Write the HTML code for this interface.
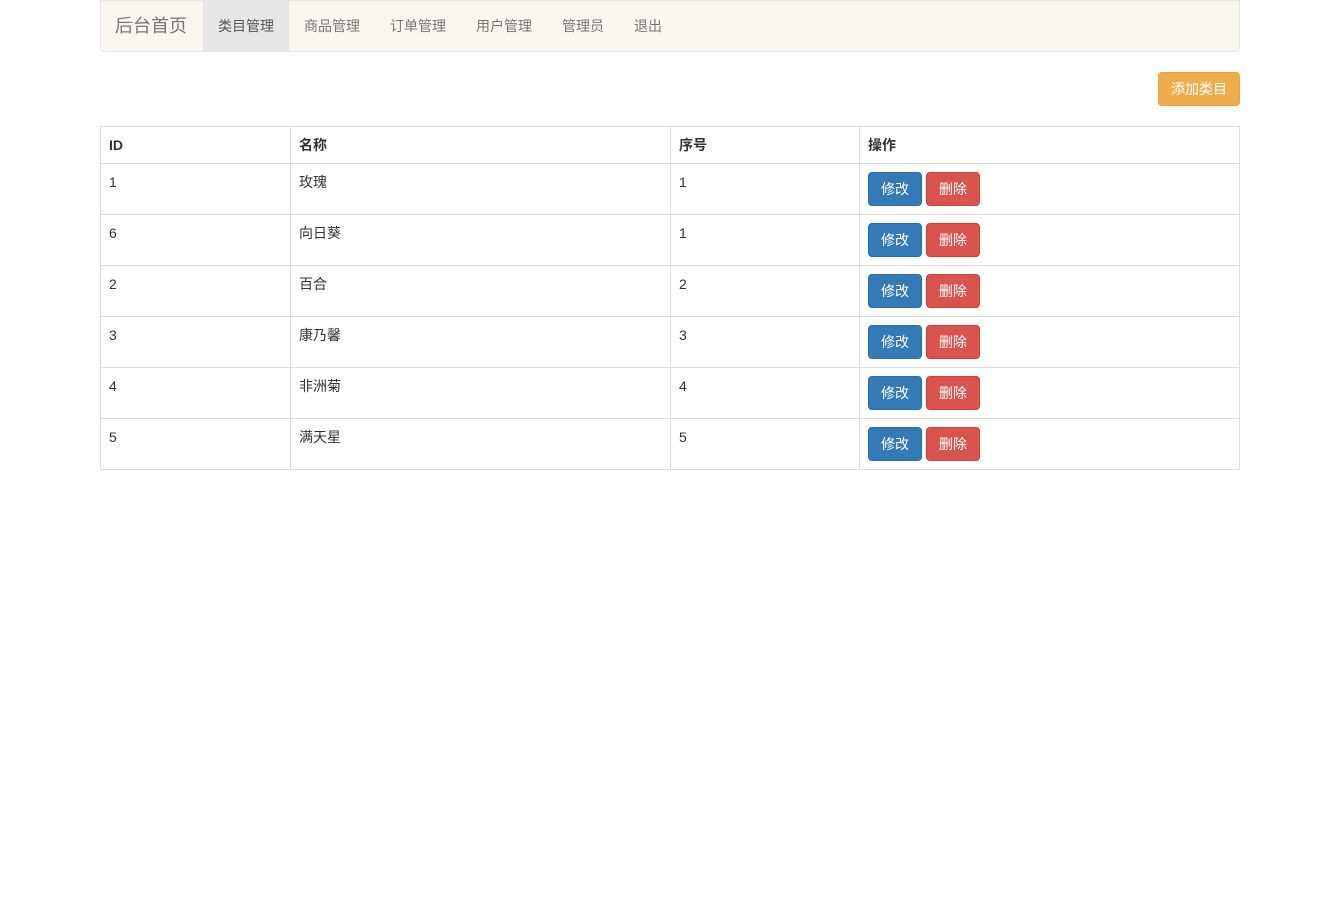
<!DOCTYPE html>
<html><head><meta charset="utf-8"><style>
body{margin:0;background:#fff;font-family:"Liberation Sans","Noto Sans CJK SC",sans-serif;font-size:14px;color:#333;}
.nav{position:absolute;left:100px;top:0;width:1138px;height:50px;background:#f9f7f0;border:1px solid #e7e7e7;border-radius:0 0 4px 4px;}
.nav a{position:absolute;top:0;height:50px;line-height:50px;color:#777;text-decoration:none;}
.brand{font-size:18px;left:14px;}
.act{background:#e7e7e7;color:#555!important;padding:0 15px;}
.add{position:absolute;left:1158px;top:72px;width:80px;height:32px;background:#f0ad4e;border:1px solid #eea236;border-radius:4px;color:#fff;text-align:center;line-height:32px;}
table{position:absolute;left:100px;top:126px;width:1140px;border-collapse:collapse;}
td,th{border:1px solid #ddd;padding:8px;vertical-align:top;text-align:left;line-height:20px;}
th{height:20px;}
td{height:34px;}
.b{display:inline-block;width:52px;height:32px;line-height:32px;text-align:center;color:#fff;border-radius:4px;}
.m{background:#337ab7;border:1px solid #2e6da4;}
.d{background:#d9534f;border:1px solid #d43f3a;}
</style></head><body>
<div class="nav">
<a class="brand">后台首页</a>
<a class="act" style="left:102px">类目管理</a>
<a style="left:203px">商品管理</a>
<a style="left:289px">订单管理</a>
<a style="left:375px">用户管理</a>
<a style="left:461px">管理员</a>
<a style="left:533px">退出</a>
</div>
<div class="add">添加类目</div>
<table>
<tr><th style="width:173px">ID</th><th style="width:363px">名称</th><th style="width:172px">序号</th><th>操作</th></tr>
<tr><td>1</td><td>玫瑰</td><td>1</td><td><span class="b m">修改</span> <span class="b d">删除</span></td></tr>
<tr><td>6</td><td>向日葵</td><td>1</td><td><span class="b m">修改</span> <span class="b d">删除</span></td></tr>
<tr><td>2</td><td>百合</td><td>2</td><td><span class="b m">修改</span> <span class="b d">删除</span></td></tr>
<tr><td>3</td><td>康乃馨</td><td>3</td><td><span class="b m">修改</span> <span class="b d">删除</span></td></tr>
<tr><td>4</td><td>非洲菊</td><td>4</td><td><span class="b m">修改</span> <span class="b d">删除</span></td></tr>
<tr><td>5</td><td>满天星</td><td>5</td><td><span class="b m">修改</span> <span class="b d">删除</span></td></tr>
</table>
</body></html>
